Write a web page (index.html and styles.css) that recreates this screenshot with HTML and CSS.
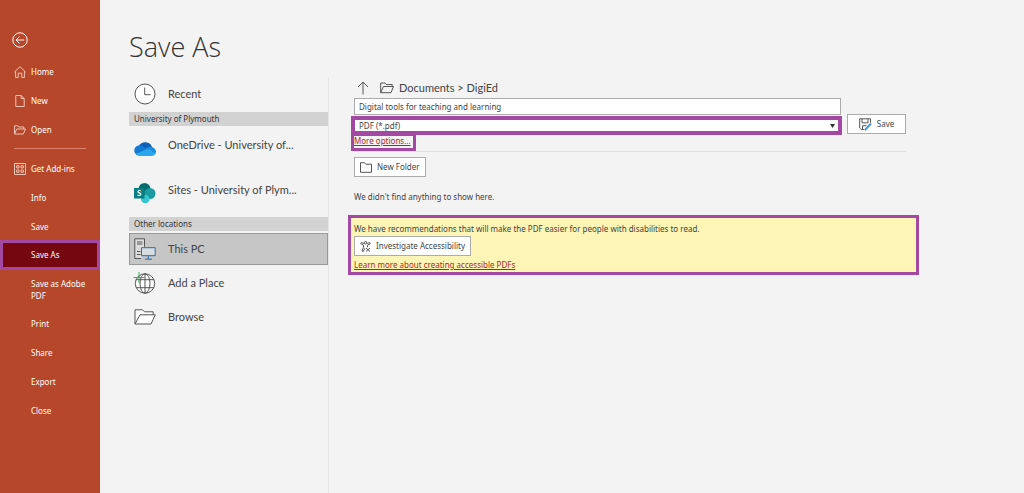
FILE: index.html
```
<!DOCTYPE html>
<html lang="en">
<head>
<meta charset="utf-8">
<meta name="viewport" content="width=device-width, initial-scale=1">
<title>Save As</title>
<link rel="stylesheet" href="styles.css">
</head>
<body>
<div class="app">
  <nav class="sidebar" aria-label="File">
    <button class="back" aria-label="Back">
      <svg width="16" height="16" viewBox="0 0 16 16"><circle cx="8" cy="8" r="7.2"/><path d="M12.3 8H4M7.3 4.7L4 8l3.300 3.300"/></svg>
    </button>
    <button class="nav-item"><svg class="nav-icon" viewBox="0 0 12 12"><path d="M.5 6L6 .7 11.500 6M1.600 5.200v6.300h2.600V7.200h3.600v4.300h2.600V5.200"/></svg>Home</button>
    <button class="nav-item"><svg class="nav-icon" viewBox="0 0 12 12"><path d="M1.800.5h5.400l3 3v8H1.800zM7.200.5v3h3"/></svg>New</button>
    <button class="nav-item"><svg class="nav-icon" viewBox="0 0 12 12"><path d="M.5 10V1.800h3.300l1 1.200h5v2M.5 10l2.300-5h8.700L9.300 10z"/></svg>Open</button>
    <hr class="nav-rule">
    <button class="nav-item"><svg class="nav-icon" viewBox="0 0 12 12"><path d="M.5.5h11v11H.5zM2.700 2.700h2.300V5H2.700zM7 2.700h2.300V5H7zM2.700 7h2.300v2.300H2.700zM7 7h2.300v2.300H7z"/></svg>Get Add-ins</button>
    <button class="nav-item plain">Info</button>
    <button class="nav-item plain">Save</button>
    <button class="nav-item plain current" aria-current="page">Save As</button>
    <button class="nav-item plain tall">Save as Adobe PDF</button>
    <button class="nav-item plain">Print</button>
    <button class="nav-item plain">Share</button>
    <button class="nav-item plain">Export</button>
    <button class="nav-item plain">Close</button>
  </nav>

  <main class="page">
    <h1>Save As</h1>
    <div class="panes">
      <section class="places" aria-label="Locations">
        <button class="place">
          <svg class="place-icon" viewBox="0 0 22 22"><circle class="paper" cx="11" cy="11" r="10"/><path d="M10.700 4.500v7.200h6"/></svg>Recent
        </button>
        <h2>University of Plymouth</h2>
        <button class="place account">
          <svg class="place-icon" viewBox="0 0 22 22"><g stroke="none"><path fill="#0b62b8" d="M5 8A7.200 7.200 0 0 1 18 9L12 13z"/><path fill="#1379d3" d="M5.200 7.500C2.300 7.500.3 9.800.3 12.500c0 2 1 3.500 2.500 4.300L14 11.400 9 8.400a7 7 0 0 0-3.800-.9z"/><path fill="#188fe0" d="M12 10.300c2-1.500 4-2 6-1.300 2.300.6 3.900 2.400 3.900 4.600 0 .8-.1 1.500-.6 2.300z"/><path fill="#28a8ea" d="M1.800 16L13 11l8.600 4.500a4 4 0 0 1-3.700 2.500H5.500a5.500 5.500 0 0 1-3.700-2z"/></g></svg>OneDrive - University of...
        </button>
        <button class="place account">
          <svg class="place-icon" viewBox="0 0 22 22"><g stroke="none"><circle fill="#036c70" cx="10.500" cy="6" r="6"/><circle fill="#1a9ba1" cx="16" cy="10.500" r="5.500"/><circle fill="#37c6d0" cx="11.300" cy="16" r="4.300"/><path fill="#0a7f83" d="M0 5h10.500v10.500H0z"/></g><text class="sites-letter" x="5.200" y="13.300">S</text></svg>Sites - University of Plym...
        </button>
        <h2>Other locations</h2>
        <button class="place selected">
          <svg class="place-icon" viewBox="0 0 22 22"><path class="tower" d="M7 20.500H.8V.8h9.700v8M3 4h5.500M3 6h5.500M3 13.500h3.500M3 16.500h3.500"/><path class="screen" d="M7.500 9.700h13.700v8H7.500zM14.300 17.700v3.300M11 21.200h7"/></svg>This PC
        </button>
        <button class="place">
          <svg class="place-icon" viewBox="0 0 22 22"><circle class="paper" cx="11" cy="11.500" r="9.700"/><path d="M2 7.700h18M2 15.700h18M11 1.800v19.400"/><ellipse cx="11" cy="11.500" rx="5" ry="9.700"/><path class="plus" d="M5 0v11M-.5 5.500h11"/></svg>Add a Place
        </button>
        <button class="place">
          <svg class="place-icon" viewBox="0 0 22 22"><path class="paper" d="M1 18V3.800h7.500l2 2h8.700v3M1 18L6 8.800h15.300L17 18z"/></svg>Browse
        </button>
      </section>

      <section class="target" aria-label="Save location">
        <div class="path">
          <button class="up" aria-label="Up one level"><svg width="12" height="14" viewBox="0 0 12 14"><path d="M6 13.500V1M1 6l5-5 5 5"/></svg></button>
          <svg width="14" height="12" viewBox="0 0 14 12"><path d="M.7 10.700V1h4.300l1.200 1.500h6v2M.7 10.700L3.500 4.500h10L11 10.700z"/></svg>
          <span>Documents &gt; DigiEd</span>
        </div>
        <form class="save-form">
          <div class="fields">
            <input class="file-name" type="text" aria-label="File name" value="Digital tools for teaching and learning">
            <div class="type-box">
              <select class="file-type" aria-label="File type"><option>PDF (*.pdf)</option></select>
              <svg class="arrow" width="5" height="4" viewBox="0 0 5 4"><path d="M0 0h5L2.500 4z"/></svg>
            </div>
          </div>
          <button class="btn save" type="button"><svg width="13" height="13" viewBox="0 0 13 13"><path d="M5 11.500H2.300L.7 10V.8h10.800v4M3 .8v4h6v-4M3.500 11.500V7.700h4"/><path class="pen" d="M5.800 12.200l6.200-6.700"/></svg>Save</button>
        </form>
        <a class="more" href="#">More options...</a>
        <hr class="rule">
        <button class="btn folder" type="button"><svg width="12" height="11" viewBox="0 0 12 11"><path d="M.5 10.300V.7h4l1.200 1.500h5.800v8.100z"/></svg>New Folder</button>
        <p class="empty">We didn't find anything to show here.</p>
        <aside class="notice">
          <p>We have recommendations that will make the PDF easier for people with disabilities to read.</p>
          <button class="btn check" type="button"><svg width="11" height="11" viewBox="0 0 11 11"><circle cx="5.500" cy="1.800" r="1.300"/><path d="M3.800 2.600L1.300 1.500.7 2.700l2.800 1.500v2L2 10l1.200.5L5 7.300M7.200 2.600l2.500-1.100.6 1.200-2.800 1.500v2M6 7l4 3.500M10 7l-4 3.500"/></svg>Investigate Accessibility</button>
          <a href="#">Learn more about creating accessible PDFs</a>
        </aside>
      </section>
    </div>
  </main>
</div>
</body>
</html>
```
FILE: styles.css
```
* { box-sizing: border-box; }

body {
  margin: 0;
  background: #f3f3f3;
  color: #444;
  font: 8px/12px "Noto Sans", "Open Sans", sans-serif;
}

button, input, select { font: inherit; color: inherit; margin: 0; border-radius: 0; }
button { cursor: pointer; }
svg { flex: none; fill: none; stroke: #555; overflow: visible; }
h1, h2, p { margin: 0; }

.app { display: flex; min-height: 100vh; }

/* Sidebar */
.sidebar {
  flex: none;
  width: 100px;
  padding-top: 32px;
  display: flex;
  flex-direction: column;
  background: #b7472a;
  color: #fff;
}
.sidebar svg { stroke: #f0c4b6; }
.back {
  width: 16px;
  height: 16px;
  margin: 0 0 9px 12px;
  padding: 0;
  border: 0;
  background: none;
}
.sidebar .back svg { display: block; stroke: #fff; }
.nav-item {
  display: flex;
  align-items: center;
  gap: 5px;
  height: 29px;
  padding: 0 8px 0 14px;
  border: 0;
  background: none;
  text-align: left;
}
.nav-icon { width: 12px; height: 12px; stroke-width: 1; }
.plain { padding-left: 31px; }
.current { height: 30px; margin-top: -1px; padding-left: 28px; border: 3px solid #a349a4; background: #750711; }
.tall { height: 39px; }
.nav-rule { width: 72px; height: 1px; margin: 4px 14px 5px; border: 0; background: #dc8069; }

/* Page */
.page { flex: 1; min-width: 0; padding: 27px 24px 24px 29px; }
h1 { font: 300 27px/40px "Open Sans", "Noto Sans", sans-serif; color: #333; }
.panes { display: flex; margin-top: 10px; }

/* Locations */
.places {
  flex: none;
  width: 200px;
  min-height: 416px;
  border-right: 1px solid #e6e6e6;
  display: flex;
  flex-direction: column;
}
h2 { margin-top: 1px; padding: 0 5px; font-size: 8px; line-height: 14px; font-weight: 400; color: #333; background: #d2d2d2; }
.place {
  display: flex;
  align-items: center;
  gap: 12px;
  height: 34px;
  padding: 0 5px;
  border: 0;
  background: none;
  font-family: Lato, "Noto Sans", sans-serif;
  font-size: 11px;
  white-space: nowrap;
  text-align: left;
}
.account { height: 45px; padding-bottom: 8px; }
.account .place-icon { margin-top: 8px; }
.selected { height: 32px; margin: 2px 0 1px; padding: 0 4px; border: 1px solid #999; background: #c6c6c6; }
.place-icon { width: 22px; height: 22px; }
.paper { fill: #fff; }
.tower { fill: #ddd; }
.screen { stroke: #2b6ca3; fill: #d6dde3; }
.plus { stroke: #35a853; }
.pen { stroke: #3f9bdc; stroke-width: 2; }
.sites-letter { font-size: 8px; font-weight: 700; text-anchor: middle; fill: #fff; stroke: none; }

/* Save target */
.target { flex: 1; min-width: 0; max-width: 577px; padding-left: 25px; }
.path { display: flex; align-items: center; height: 21px; padding-left: 3px; font-family: Lato, "Noto Sans", sans-serif; font-size: 11px; }
.path span { margin-left: 5px; }
.up { padding: 0; margin-right: 11px; border: 0; background: none; }
.up svg { display: block; }
.save-form { display: flex; align-items: flex-end; gap: 6px; }
.fields { flex: 1; min-width: 0; }
.file-name {
  display: block;
  width: 100%;
  height: 17px;
  padding: 0 4px;
  border: 1px solid #ababab;
  background: #fff;
}
.type-box { position: relative; margin: 1px -1px 0 -3px; }
.file-type {
  display: block;
  appearance: none;
  width: 100%;
  height: 19px;
  padding: 0 4px;
  border: 4px solid #a349a4;
  background: #fff;
}
.arrow { position: absolute; right: 7px; top: 8px; fill: #333; stroke: none; }
.btn {
  display: flex;
  align-items: center;
  gap: 5px;
  height: 20px;
  padding: 0 5px;
  border: 1px solid #ababab;
  background: #fff;
  white-space: nowrap;
}
.save { flex: none; width: 59px; margin-bottom: 1px; justify-content: center; }
a { color: #b3261e; }
.more {
  display: block;
  width: max-content;
  height: 18px;
  margin: -2px 0 0 -3px;
  padding-right: 2px;
  border: 3px solid #a349a4;
  line-height: 10px;
}
.rule { height: 1px; margin: 0 0 5px; border: 0; background: #e1e1e1; }
.empty { margin: 14px 0 12px; }
.notice {
  display: flex;
  flex-direction: column;
  align-items: flex-start;
  margin: 0 -13px 0 -6px;
  padding: 5px 3px 1px;
  border: 3px solid #a349a4;
  background: #fdf5b5;
}
.notice .btn { margin: 1px 0 3px; }
```
